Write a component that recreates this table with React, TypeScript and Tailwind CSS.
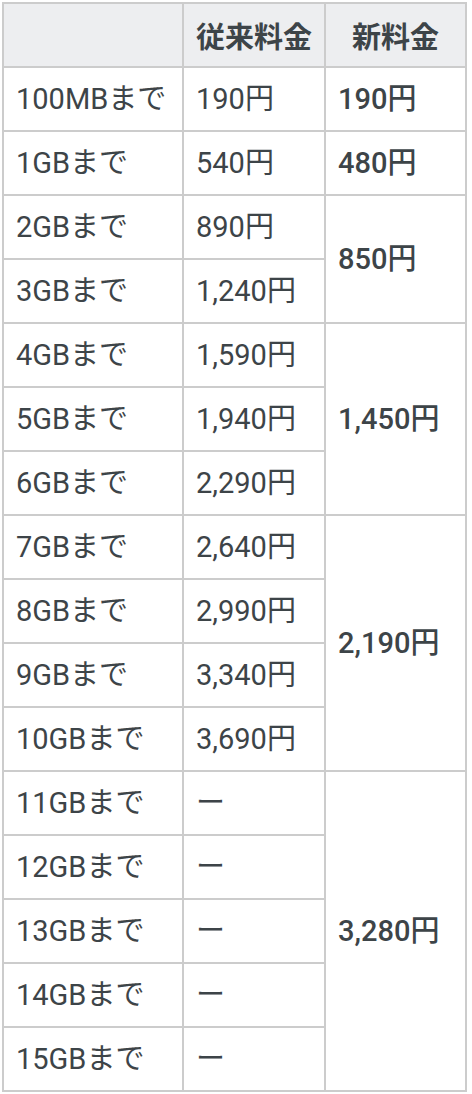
const rows: { plan: string; old: string; next?: string; span?: number }[] = [
  { plan: '100MBまで', old: '190円', next: '190円', span: 1 },
  { plan: '1GBまで', old: '540円', next: '480円', span: 1 },
  { plan: '2GBまで', old: '890円', next: '850円', span: 2 },
  { plan: '3GBまで', old: '1,240円' },
  { plan: '4GBまで', old: '1,590円', next: '1,450円', span: 3 },
  { plan: '5GBまで', old: '1,940円' },
  { plan: '6GBまで', old: '2,290円' },
  { plan: '7GBまで', old: '2,640円', next: '2,190円', span: 4 },
  { plan: '8GBまで', old: '2,990円' },
  { plan: '9GBまで', old: '3,340円' },
  { plan: '10GBまで', old: '3,690円' },
  { plan: '11GBまで', old: 'ー', next: '3,280円', span: 5 },
  { plan: '12GBまで', old: 'ー' },
  { plan: '13GBまで', old: 'ー' },
  { plan: '14GBまで', old: 'ー' },
  { plan: '15GBまで', old: 'ー' },
];

const cell = 'border-2 border-[#cccccc] px-3 align-middle';

export default function App() {
  return (
    <div className="bg-white min-h-screen p-[2px] font-['Roboto','Noto_Sans_CJK_JP',sans-serif] text-[29px] leading-none text-[#3d4448]">
      <table className="border-collapse w-[465px] table-fixed">
        <colgroup>
          <col className="w-[180px]" />
          <col className="w-[142px]" />
          <col className="w-[141px]" />
        </colgroup>
        <thead>
          <tr className="h-[64px] bg-[#edeef0]">
            <th className={cell} />
            <th className={`${cell} font-bold text-center font-['Noto_Sans_CJK_JP',sans-serif]`}>従来料金</th>
            <th className={`${cell} font-bold text-center font-['Noto_Sans_CJK_JP',sans-serif]`}>新料金</th>
          </tr>
        </thead>
        <tbody>
          {rows.map((row) => (
            <tr key={row.plan} className="h-[64px]">
              <td className={`${cell} text-left whitespace-nowrap`}>{row.plan}</td>
              <td className={`${cell} text-left`}>{row.old}</td>
              {row.next && (
                <td rowSpan={row.span} className={`${cell} text-left font-medium`}>
                  {row.next}
                </td>
              )}
            </tr>
          ))}
        </tbody>
      </table>
    </div>
  );
}
